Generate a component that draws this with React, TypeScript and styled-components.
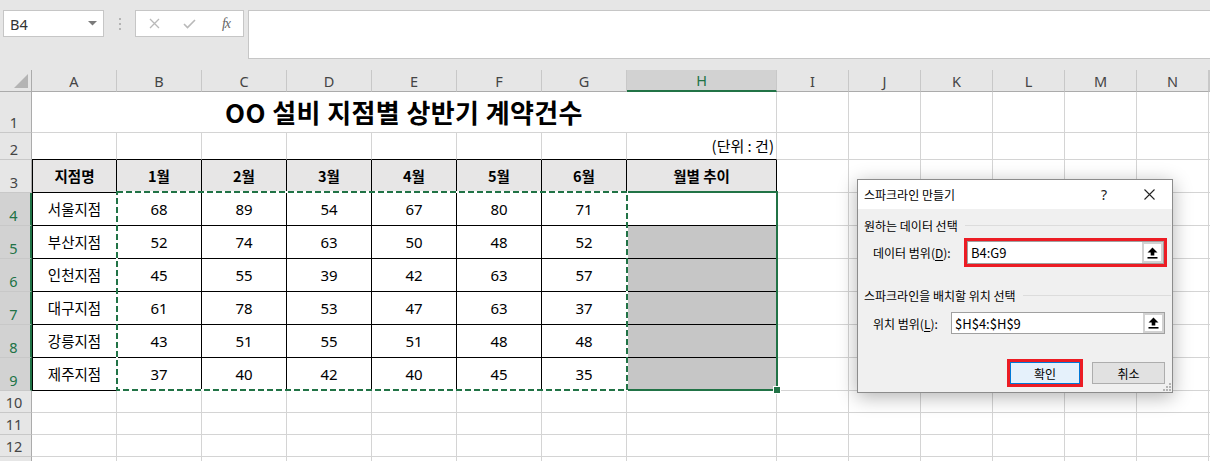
import React from "react";
import styled, { createGlobalStyle } from "styled-components";

const GREEN = "#217346";
const GRID = "#d4d4d4";
const RED = "#ec1c24";

const COLS = ["A", "B", "C", "D", "E", "F", "G", "H", "I", "J", "K", "L", "M", "N"];
const COL_W = [85, 85, 85, 85, 85, 85, 85, 150, 72, 72, 72, 72, 72, 72];
const ROW_HDR_W = 32;
const HDR_H = 22;
const ROW_H = [41, 27, 33, 33, 33, 33, 33, 33, 33, 22, 22, 22, 22];

const colLeft = (i: number) => ROW_HDR_W + COL_W.slice(0, i).reduce((a, b) => a + b, 0);
const rowTop = (r: number) => HDR_H + ROW_H.slice(0, r - 1).reduce((a, b) => a + b, 0);

const months = ["1월", "2월", "3월", "4월", "5월", "6월"];
const branches: [string, number[]][] = [
  ["서울지점", [68, 89, 54, 67, 80, 71]],
  ["부산지점", [52, 74, 63, 50, 48, 52]],
  ["인천지점", [45, 55, 39, 42, 63, 57]],
  ["대구지점", [61, 78, 53, 47, 63, 37]],
  ["강릉지점", [43, 51, 55, 51, 48, 48]],
  ["제주지점", [37, 40, 42, 40, 45, 35]],
];

const GlobalStyle = createGlobalStyle`
  html, body {
    margin: 0;
    padding: 0;
    background: #fff;
  }
  body {
    font-family: "Noto Sans CJK KR", "Noto Sans", sans-serif;
  }
`;

const Root = styled.div`
  position: relative;
  width: 1210px;
  height: 461px;
  overflow: hidden;
  background: #fff;
`;

/* ---------- formula bar ---------- */

const FormulaBar = styled.div`
  box-sizing: border-box;
  height: 70px;
  background: #e6e6e6;
  display: flex;
  align-items: flex-start;
  padding: 10px 0 0 3px;
`;

const NameBox = styled.div`
  box-sizing: border-box;
  width: 101px;
  height: 27px;
  background: #fff;
  border: 1px solid #c6c6c6;
  display: flex;
  align-items: center;
  justify-content: space-between;
  padding: 0 6px 0 6px;
  font: 14.5px "Noto Sans", sans-serif;
  color: #333;
`;

const Grip = styled.div`
  width: 31px;
  height: 27px;
  display: flex;
  flex-direction: column;
  align-items: center;
  justify-content: center;
  gap: 3px;

  span {
    width: 2px;
    height: 2px;
    background: #b4b4b4;
  }
`;

const FxBox = styled.div`
  box-sizing: border-box;
  width: 109px;
  height: 27px;
  background: #fff;
  border: 1px solid #c6c6c6;
  display: grid;
  grid-template-columns: 36px 35px 38px;
  align-items: center;
  justify-items: center;
`;

const FxLabel = styled.span`
  font: italic 14px "Liberation Serif", serif;
  color: #666;
  letter-spacing: -1px;
`;

const FormulaInput = styled.div`
  box-sizing: border-box;
  flex: 1;
  height: 49px;
  margin-left: 4px;
  background: #fff;
  border: 1px solid #c6c6c6;
  border-right: none;
`;

/* ---------- sheet ---------- */

const Sheet = styled.div`
  position: relative;
  display: grid;
  grid-template-columns: ${ROW_HDR_W}px ${COL_W.map((w) => `${w}px`).join(" ")} 1fr;
  grid-template-rows: ${HDR_H}px ${ROW_H.map((h) => `${h}px`).join(" ")};
`;

const Corner = styled.div`
  box-sizing: border-box;
  background: #e6e6e6;
  border-right: 1px solid #ababab;
  border-bottom: 1px solid #ababab;
  display: flex;
  align-items: flex-end;
  justify-content: flex-end;
  padding: 0 3px 3px 0;

  span {
    width: 14px;
    height: 14px;
    background: #b4b4b4;
    clip-path: polygon(100% 0, 100% 100%, 0 100%);
  }
`;

const ColHead = styled.div<{ $selected?: boolean }>`
  box-sizing: border-box;
  display: flex;
  align-items: center;
  justify-content: center;
  background: ${({ $selected }) => ($selected ? "#d2d2d2" : "#e6e6e6")};
  color: ${({ $selected }) => ($selected ? GREEN : "#444")};
  border-right: 1px solid #c8c8c8;
  border-bottom: ${({ $selected }) => ($selected ? `2px solid ${GREEN}` : "1px solid #ababab")};
  font: 14.5px "Noto Sans", sans-serif;
  line-height: 18px;
`;

const RowHead = styled.div<{ $selected?: boolean }>`
  box-sizing: border-box;
  display: flex;
  align-items: flex-end;
  justify-content: center;
  padding: 0 3px 1px 0;
  background: ${({ $selected }) => ($selected ? "#d2d2d2" : "#e6e6e6")};
  color: ${({ $selected }) => ($selected ? GREEN : "#444")};
  border-right: ${({ $selected }) => ($selected ? `2px solid ${GREEN}` : "1px solid #ababab")};
  border-bottom: 1px solid #c8c8c8;
  font: 14.5px "Noto Sans", sans-serif;
  line-height: 18px;
`;

const Cell = styled.div<{
  $table?: boolean;
  $leftEdge?: boolean;
  $tableTop?: boolean;
  $bg?: string;
  $align?: "center" | "right";
  $span?: number;
}>`
  box-sizing: border-box;
  min-width: 0;
  display: flex;
  align-items: center;
  justify-content: ${({ $align }) => ($align === "right" ? "flex-end" : "center")};
  padding: 0 3px;
  background: ${({ $bg }) => $bg || "#fff"};
  border-right: 1px solid ${({ $table }) => ($table ? "#000" : GRID)};
  border-bottom: 1px solid ${({ $table, $tableTop }) => ($table || $tableTop ? "#000" : GRID)};
  border-left: ${({ $leftEdge }) => ($leftEdge ? "1px solid #000" : "none")};
  grid-column: ${({ $span }) => ($span ? `span ${$span}` : "auto")};
  font-family: "Noto Sans CJK KR", sans-serif;
  font-size: 14.5px;
  line-height: 20px;
  white-space: nowrap;
  color: #000;
`;

const NumCell = styled(Cell)`
  font-family: "Noto Sans", sans-serif;
  font-size: 15px;
`;

const HeadCell = styled(Cell)`
  background: #e7e6e6;
  font-weight: 700;
`;

const UnitCell = styled(Cell)`
  font-size: 15px;
  padding-right: 2px;
`;

const TitleCell = styled(Cell)`
  font-size: 26px;
  font-weight: 700;
  line-height: 32px;
  letter-spacing: 0.4px;
`;

const Filler = styled.div`
  box-sizing: border-box;
  border-bottom: 1px solid ${GRID};
`;

const SelectionBox = styled.div`
  position: absolute;
  box-sizing: border-box;
  border: 2px solid ${GREEN};
  pointer-events: none;
`;

const FillHandle = styled.div`
  position: absolute;
  width: 6px;
  height: 6px;
  background: ${GREEN};
  border: 1px solid #fff;
`;

const Ants = styled.svg`
  position: absolute;
  display: block;
  overflow: visible;
  pointer-events: none;
`;

/* ---------- dialog ---------- */

const Dialog = styled.div`
  position: absolute;
  left: 857px;
  top: 179px;
  width: 316px;
  height: 214px;
  box-sizing: border-box;
  border: 1px solid #8c8c8c;
  background: #f0f0f0;
  box-shadow: 0 4px 18px rgba(0, 0, 0, 0.3);
  display: flex;
  flex-direction: column;
  font-family: "Noto Sans CJK KR", sans-serif;
  font-size: 12px;
  color: #000;
`;

const TitleBar = styled.div`
  height: 29px;
  background: #fff;
  display: flex;
  align-items: center;
  padding-left: 6px;
`;

const DialogTitle = styled.div`
  flex: 1;
`;

const TitleButton = styled.div<{ $w: number }>`
  width: ${({ $w }) => $w}px;
  height: 29px;
  display: flex;
  align-items: center;
  justify-content: center;
  font: 14px "Noto Sans", sans-serif;
  color: #222;
`;

const DialogBody = styled.div`
  position: relative;
  flex: 1;
  display: flex;
  flex-direction: column;
  padding: 0 5px 0 6px;
`;

const Legend = styled.div<{ $mt: number }>`
  display: flex;
  align-items: center;
  gap: 7px;
  height: 16px;
  margin: ${({ $mt }) => $mt}px -4px 0 0;

  &::after {
    content: "";
    flex: 1;
    height: 1px;
    background: #dcdcdc;
  }
`;

const FieldRow = styled.div<{ $mt: number; $h: number }>`
  display: flex;
  align-items: center;
  height: ${({ $h }) => $h}px;
  margin-top: ${({ $mt }) => $mt}px;
  padding-left: 9px;
`;

const FieldLabel = styled.span`
  flex: 1;

  u {
    text-underline-offset: 2px;
  }
`;

const RedBox = styled.div<{ $w: number }>`
  box-sizing: border-box;
  width: ${({ $w }) => $w}px;
  height: 100%;
  border: 3px solid ${RED};
  display: flex;
`;

const RangeInput = styled.div<{ $w?: number }>`
  box-sizing: border-box;
  ${({ $w }) => ($w ? `width: ${$w}px; margin-right: 2px;` : "flex: 1;")}
  height: 100%;
  display: flex;
  align-items: center;
  background: #fff;
  border: 1px solid #a0a0a0;
  font: 13px "Noto Sans CJK KR", sans-serif;
`;

const RangeText = styled.span`
  flex: 1;
  padding-left: 3px;
`;

const CollapseButton = styled.div`
  box-sizing: border-box;
  width: 21px;
  height: 100%;
  display: flex;
  align-items: center;
  justify-content: center;
  background: #fff;
  border: 2px solid #d2d2d2;
`;

const ButtonRow = styled.div`
  display: flex;
  align-items: center;
  justify-content: flex-end;
  gap: 9px;
  height: 28px;
  margin: 25px 2px 0 0;
`;

const RedFrame = styled.div`
  box-sizing: border-box;
  width: 76px;
  height: 28px;
  border: 3px solid ${RED};
  display: flex;
`;

const DialogButton = styled.div<{ $primary?: boolean }>`
  box-sizing: border-box;
  ${({ $primary }) => ($primary ? "flex: 1;" : "width: 73px;")}
  height: 22px;
  display: flex;
  align-items: center;
  justify-content: center;
  background: ${({ $primary }) => ($primary ? "#e5f1fb" : "#e1e1e1")};
  border: 1px solid ${({ $primary }) => ($primary ? "#0078d7" : "#adadad")};
`;

const ResizeGrip = styled.svg`
  position: absolute;
  right: 1px;
  bottom: 1px;
`;

const UpArrow = () => (
  <svg width="11" height="12" viewBox="0 0 11 12">
    <path d="M5.5 0.5 L10.5 5.5 H7.3 V8.5 H3.7 V5.5 H0.5 Z" fill="#000" />
    <rect x="0.5" y="10" width="10" height="1.6" fill="#000" />
  </svg>
);

export default function App() {
  const antsLeft = colLeft(1) - 1;
  const antsTop = rowTop(4) - 2;
  const antsW = colLeft(7) + 1 - antsLeft;
  const antsH = rowTop(10) - antsTop;
  const selLeft = colLeft(7) - 1;
  const selW = colLeft(8) + 1 - selLeft;

  const emptyCells = (from: number, row: number) =>
    COLS.slice(from).map((c) => <Cell key={`${c}${row}`} />);

  const rows: React.ReactNode[] = [];
  for (let r = 1; r <= ROW_H.length; r++) {
    const selected = r >= 4 && r <= 9;
    // the 13th row only peeks in at the bottom edge, its number is not visible
    rows.push(
      <RowHead key={`rh${r}`} $selected={selected}>
        {r < ROW_H.length ? r : ""}
      </RowHead>,
    );
    if (r === 1) {
      rows.push(
        <TitleCell key="title" $span={8}>
          OO 설비 지점별 상반기 계약건수
        </TitleCell>,
        ...emptyCells(8, r),
      );
    } else if (r === 2) {
      rows.push(
        ...COLS.slice(0, 7).map((c) => <Cell key={`${c}2`} $tableTop />),
        <UnitCell key="H2" $tableTop $align="right">
          (단위 : 건)
        </UnitCell>,
        ...emptyCells(8, r),
      );
    } else if (r === 3) {
      rows.push(
        <HeadCell key="A3" $table $leftEdge>
          지점명
        </HeadCell>,
        ...months.map((m) => (
          <HeadCell key={m} $table>
            {m}
          </HeadCell>
        )),
        <HeadCell key="H3" $table>
          월별 추이
        </HeadCell>,
        ...emptyCells(8, r),
      );
    } else if (selected) {
      const [name, vals] = branches[r - 4];
      rows.push(
        <Cell key={`A${r}`} $table $leftEdge>
          {name}
        </Cell>,
        ...vals.map((v, i) => (
          <NumCell key={`${COLS[i + 1]}${r}`} $table>
            {v}
          </NumCell>
        )),
        <Cell key={`H${r}`} $table $bg={r === 4 ? "#fff" : "#c6c6c6"} />,
        ...emptyCells(8, r),
      );
    } else {
      rows.push(...emptyCells(0, r));
    }
    rows.push(<Filler key={`f${r}`} />);
  }

  return (
    <Root>
      <GlobalStyle />
      <FormulaBar>
        <NameBox>
          B4
          <svg width="9" height="5" viewBox="0 0 9 5">
            <path d="M0 0 H9 L4.5 4.5 Z" fill="#7a7a7a" />
          </svg>
        </NameBox>
        <Grip>
          <span />
          <span />
          <span />
        </Grip>
        <FxBox>
          <svg width="11" height="11" viewBox="0 0 11 11">
            <path d="M1 1 L10 10 M10 1 L1 10" stroke="#b9b9b9" strokeWidth="1.3" />
          </svg>
          <svg width="13" height="10" viewBox="0 0 13 10">
            <path d="M1 5 L4.5 8.5 L12 1" stroke="#b9b9b9" strokeWidth="1.6" fill="none" />
          </svg>
          <FxLabel>fx</FxLabel>
        </FxBox>
        <FormulaInput />
      </FormulaBar>

      <Sheet>
        <Corner>
          <span />
        </Corner>
        {COLS.map((c) => (
          <ColHead key={c} $selected={c === "H"}>
            {c}
          </ColHead>
        ))}
        <ColHead />
        {rows}

        <SelectionBox
          style={{ left: selLeft, top: antsTop, width: selW, height: antsH }}
        />
        <FillHandle style={{ left: selLeft + selW - 5, top: antsTop + antsH - 5 }} />
        <Ants
          width={antsW}
          height={antsH}
          viewBox={`0 0 ${antsW} ${antsH}`}
          shapeRendering="crispEdges"
          style={{ left: antsLeft, top: antsTop }}
        >
          <rect
            x="1"
            y="1"
            width={antsW - 2}
            height={antsH - 2}
            fill="none"
            stroke="#fff"
            strokeWidth="2"
          />
          <rect
            x="1"
            y="1"
            width={antsW - 2}
            height={antsH - 2}
            fill="none"
            stroke={GREEN}
            strokeWidth="2"
            strokeDasharray="6 3"
          />
        </Ants>
      </Sheet>

      <Dialog>
        <TitleBar>
          <DialogTitle>스파크라인 만들기</DialogTitle>
          <TitleButton $w={30}>?</TitleButton>
          <TitleButton $w={7} />
          <TitleButton $w={46}>
            <svg width="11" height="11" viewBox="0 0 11 11">
              <path d="M0.5 0.5 L10.5 10.5 M10.5 0.5 L0.5 10.5" stroke="#222" strokeWidth="1.1" />
            </svg>
          </TitleButton>
        </TitleBar>
        <DialogBody>
          <Legend $mt={8}>원하는 데이터 선택</Legend>
          <FieldRow $mt={5} $h={29}>
            <FieldLabel>
              데이터 범위(<u>D</u>):
            </FieldLabel>
            <RedBox $w={203}>
              <RangeInput>
                <RangeText>B4:G9</RangeText>
                <CollapseButton>
                  <UpArrow />
                </CollapseButton>
              </RangeInput>
            </RedBox>
          </FieldRow>
          <Legend $mt={20}>스파크라인을 배치할 위치 선택</Legend>
          <FieldRow $mt={9} $h={22}>
            <FieldLabel>
              위치 범위(<u>L</u>):
            </FieldLabel>
            <RangeInput $w={214}>
              <RangeText>$H$4:$H$9</RangeText>
              <CollapseButton>
                <UpArrow />
              </CollapseButton>
            </RangeInput>
          </FieldRow>
          <ButtonRow>
            <RedFrame>
              <DialogButton $primary>확인</DialogButton>
            </RedFrame>
            <DialogButton>취소</DialogButton>
          </ButtonRow>
          <ResizeGrip width="9" height="9" viewBox="0 0 9 9">
            {[
              [7, 1],
              [7, 4],
              [4, 4],
              [7, 7],
              [4, 7],
              [1, 7],
            ].map(([x, y]) => (
              <rect key={`${x}-${y}`} x={x} y={y} width="2" height="2" fill="#b4b4b4" />
            ))}
          </ResizeGrip>
        </DialogBody>
      </Dialog>
    </Root>
  );
}
